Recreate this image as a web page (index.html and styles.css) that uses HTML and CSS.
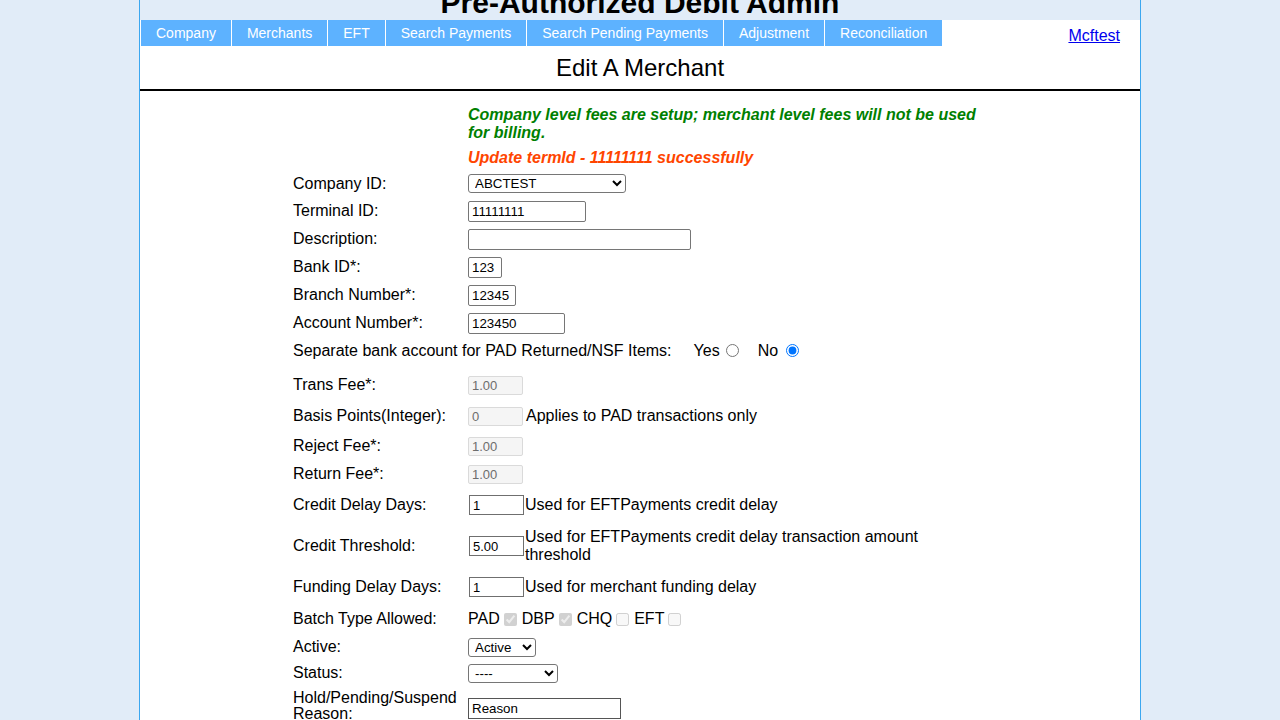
FILE: index.html
```html
<!DOCTYPE html>
<html lang="en">
<head>
<meta charset="utf-8">
<title>Edit A Merchant</title>
<link rel="stylesheet" href="styles.css">
</head>
<body>
<div class="page">
  <header class="masthead">
    <h1 class="site-title">Pre-Authorized Debit Admin</h1>
  </header>
  <div class="topbar">
    <nav class="tabs">
      <a class="tab" href="#">Company</a>
      <a class="tab" href="#">Merchants</a>
      <a class="tab" href="#">EFT</a>
      <a class="tab" href="#">Search Payments</a>
      <a class="tab" href="#">Search Pending Payments</a>
      <a class="tab" href="#">Adjustment</a>
      <a class="tab" href="#">Reconciliation</a>
    </nav>
    <a class="user-link" href="#">Mcftest</a>
  </div>
  <h2 class="page-title">Edit A Merchant</h2>

  <form class="merchant-form">
    <div class="row row-msg1">
      <span></span>
      <p class="msg msg-info">Company level fees are setup; merchant level fees will not be used for billing.</p>
    </div>
    <div class="row row-msg2">
      <span></span>
      <p class="msg msg-ok">Update termId - 11111111 successfully</p>
    </div>

    <div class="row row-company">
      <label class="lbl">Company ID:</label>
      <div class="val"><select class="sel sel-company"><option>ABCTEST</option></select></div>
    </div>
    <div class="row">
      <label class="lbl">Terminal ID:</label>
      <div class="val"><input class="txt w-terminal" type="text" value="11111111"></div>
    </div>
    <div class="row">
      <label class="lbl">Description:</label>
      <div class="val"><input class="txt w-desc" type="text" value=""></div>
    </div>
    <div class="row">
      <label class="lbl">Bank ID*:</label>
      <div class="val"><input class="txt w-bank" type="text" value="123"></div>
    </div>
    <div class="row">
      <label class="lbl">Branch Number*:</label>
      <div class="val"><input class="txt w-branch" type="text" value="12345"></div>
    </div>
    <div class="row">
      <label class="lbl">Account Number*:</label>
      <div class="val"><input class="txt w-account" type="text" value="123450"></div>
    </div>
    <div class="row row-wide">
      <span class="lbl">Separate bank account for PAD Returned/NSF Items:</span>
      <span class="radio-opt radio-yes">Yes<input class="radio" type="radio" name="sep"></span>
      <span class="radio-opt radio-no">No<input class="radio" type="radio" name="sep" checked></span>
    </div>

    <div class="row row-trans">
      <label class="lbl">Trans Fee*:</label>
      <div class="val"><input class="fee" type="text" value="1.00" disabled></div>
    </div>
    <div class="row row-basis">
      <label class="lbl">Basis Points(Integer):</label>
      <div class="val"><input class="fee" type="text" value="0" disabled><span class="note">Applies to PAD transactions only</span></div>
    </div>
    <div class="row row-reject">
      <label class="lbl">Reject Fee*:</label>
      <div class="val"><input class="fee" type="text" value="1.00" disabled></div>
    </div>
    <div class="row row-return">
      <label class="lbl">Return Fee*:</label>
      <div class="val"><input class="fee" type="text" value="1.00" disabled></div>
    </div>
    <div class="row row-32">
      <label class="lbl">Credit Delay Days:</label>
      <div class="val"><input class="num" type="text" value="1"><span class="note">Used for EFTPayments credit delay</span></div>
    </div>
    <div class="row row-threshold">
      <label class="lbl">Credit Threshold:</label>
      <div class="val"><input class="num" type="text" value="5.00"><span class="note">Used for EFTPayments credit delay transaction amount threshold</span></div>
    </div>
    <div class="row row-32">
      <label class="lbl">Funding Delay Days:</label>
      <div class="val"><input class="num" type="text" value="1"><span class="note">Used for merchant funding delay</span></div>
    </div>
    <div class="row row-32">
      <label class="lbl">Batch Type Allowed:</label>
      <div class="val batch"><span class="lbl">PAD</span><input class="chk" type="checkbox" checked disabled><span class="lbl">DBP</span><input class="chk" type="checkbox" checked disabled><span class="lbl">CHQ</span><input class="chk" type="checkbox" disabled><span class="lbl">EFT</span><input class="chk" type="checkbox" disabled></div>
    </div>
    <div class="row row-active">
      <label class="lbl">Active:</label>
      <div class="val"><select class="sel sel-active"><option>Active</option></select></div>
    </div>
    <div class="row">
      <label class="lbl">Status:</label>
      <div class="val"><select class="sel sel-status"><option>----</option></select></div>
    </div>
    <div class="row row-hold">
      <label class="lbl lbl-two">Hold/Pending/Suspend Reason:</label>
      <div class="val"><input class="txt txt-dark w-reason" type="text" value="Reason"></div>
    </div>
  </form>
</div>
</body>
</html>
```

FILE: styles.css
```css
html, body {
  margin: 0;
  padding: 0;
  background: #e1ecf8;
  font-family: "Liberation Sans", Arial, sans-serif;
  color: #000;
}

.page {
  width: 1000px;
  margin: 0 auto;
  border-left: 1px solid #3ba7f0;
  border-right: 1px solid #3ba7f0;
  background: #fff;
  min-height: 720px;
}

.masthead {
  height: 20px;
  overflow: hidden;
  background: #e1ecf8;
}

.site-title {
  margin: -14px 0 0;
  font-size: 30px;
  line-height: 34px;
  font-weight: bold;
  text-align: center;
}

.topbar {
  display: flex;
  justify-content: space-between;
  align-items: flex-start;
  height: 26px;
}

.tabs {
  display: flex;
  margin-left: 1px;
}

.tab {
  display: block;
  height: 26px;
  line-height: 26px;
  padding: 0 15px;
  margin-right: 1px;
  background: #5db2ff;
  color: #fff;
  font-size: 14px;
  text-decoration: none;
}

.user-link {
  margin: 7px 20px 0 0;
  font-size: 16px;
  line-height: 18px;
  color: #0000ee;
  text-decoration: underline;
}

.page-title {
  margin: 8px 0 0;
  padding-bottom: 7px;
  border-bottom: 2px solid #000;
  font-size: 24px;
  line-height: 28px;
  font-weight: normal;
  text-align: center;
}

.merchant-form {
  padding: 15px 0 0 153px;
}

.row {
  display: grid;
  grid-template-columns: 175px auto;
  align-items: center;
  height: 28px;
  font-size: 16px;
  line-height: 18px;
}

.row-msg1 { height: 36px; margin-bottom: 7px; }
.row-msg2 { height: 18px; margin-bottom: 2px; }
.row-company .lbl { padding-top: 2px; }

.msg {
  margin: 0;
  width: 520px;
  font-size: 16px;
  line-height: 18px;
  font-weight: bold;
  font-style: italic;
}
.msg-info { color: #008000; }
.msg-ok { color: #ff4500; }

.lbl { white-space: nowrap; }
.lbl-two {
  white-space: normal;
  width: 170px;
  line-height: 16px;
  margin-top: -4px;
}

.val {
  display: flex;
  align-items: center;
}

.row-wide {
  display: flex;
}

.radio-opt {
  display: inline-flex;
  align-items: center;
}
.radio-yes { margin-left: 22px; }
.radio-no { margin-left: 19px; }

.radio {
  width: 13px;
  height: 13px;
  margin: -1px 0 0 6px;
}
.radio-no .radio { margin-left: 8px; }

.row-trans { margin-top: 6px; }
.row-basis { height: 34px; }
.row-reject { height: 26px; }
.row-return { height: 30px; }
.row-32 { height: 32px; }
.row-threshold { height: 50px; }
.row-active { height: 24px; }
.row-hold { height: 42px; }

.txt {
  box-sizing: border-box;
  height: 21px;
  padding: 1px 3px;
  border: 1px solid #767676;
  border-radius: 2px;
  font-family: "Liberation Sans", Arial, sans-serif;
  font-size: 13.333px;
  color: #000;
  background: #fff;
}
.txt-dark { border-color: #555; border-radius: 0; }

.w-terminal { width: 118px; }
.w-desc { width: 223px; }
.w-bank { width: 34px; }
.w-branch { width: 48px; }
.w-account { width: 97px; }
.w-reason { width: 153px; }

.fee {
  box-sizing: border-box;
  width: 55px;
  height: 19px;
  padding: 1px 3px;
  border: 1px solid #dadada;
  border-radius: 2px;
  background: #f5f5f5;
  color: #6d6d6d;
  font-family: "Liberation Sans", Arial, sans-serif;
  font-size: 13px;
}

.num {
  box-sizing: border-box;
  width: 55px;
  height: 20px;
  margin-left: 1px;
  padding: 1px 3px;
  border: 1px solid #6f6f6f;
  border-radius: 0;
  background: #fff;
  color: #000;
  font-family: "Liberation Sans", Arial, sans-serif;
  font-size: 13px;
}

.note {
  margin-left: 3px;
  max-width: 400px;
  font-size: 16px;
  line-height: 18px;
}
.num + .note { margin-left: 1px; }

.batch { font-size: 16px; }
.chk {
  width: 13px;
  height: 13px;
  margin: 0 5px 0 4px;
}

.sel {
  box-sizing: border-box;
  height: 19px;
  padding: 0 2px;
  border: 1px solid #767676;
  border-radius: 3px;
  background: #fff;
  color: #000;
  font-family: "Liberation Sans", Arial, sans-serif;
  font-size: 13.333px;
}
.sel-company { width: 158px; }
.sel-active { width: 68px; }
.sel-status { width: 90px; }
```
